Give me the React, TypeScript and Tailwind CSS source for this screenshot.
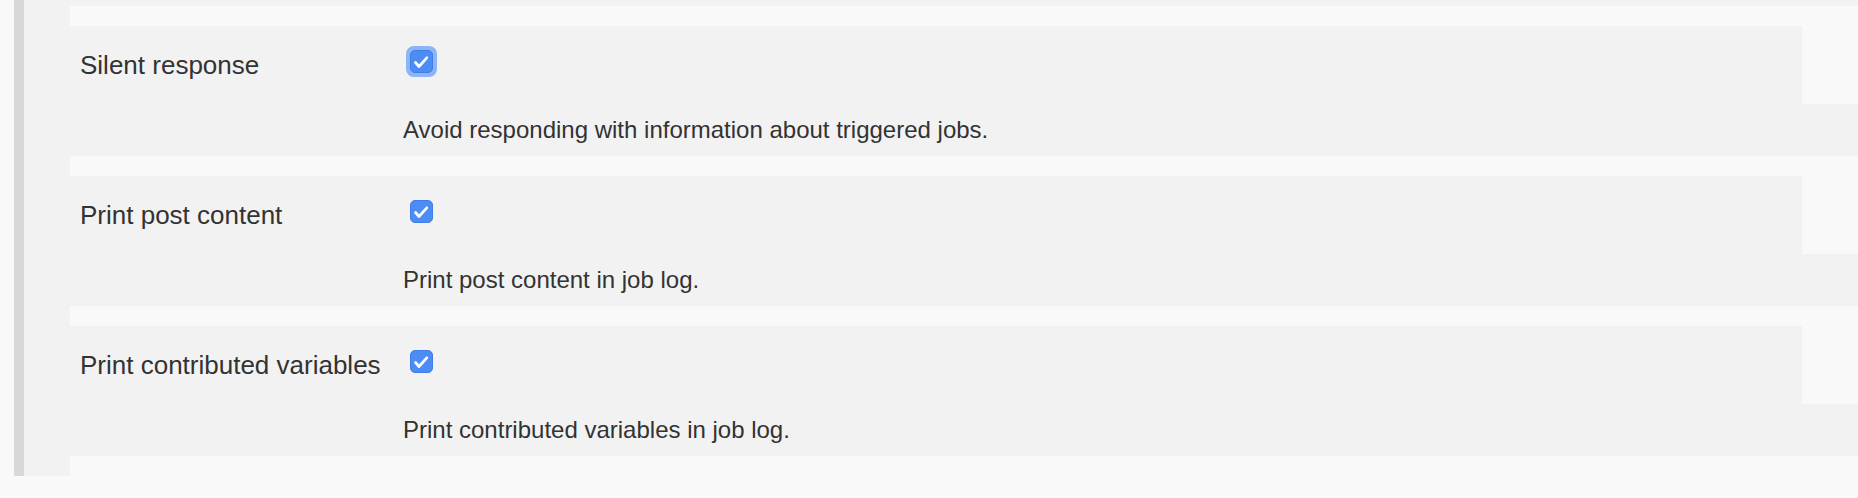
import React from 'react';

interface Setting {
  label: string;
  description: string;
  focused?: boolean;
}

const settings: Setting[] = [
  {
    label: 'Silent response',
    description: 'Avoid responding with information about triggered jobs.',
    focused: true,
  },
  {
    label: 'Print post content',
    description: 'Print post content in job log.',
  },
  {
    label: 'Print contributed variables',
    description: 'Print contributed variables in job log.',
  },
];

const CheckBox: React.FC<{ focused?: boolean }> = ({ focused }) => (
  <div
    className={
      focused
        ? 'ml-[4px] -mt-[4px] rounded-[8px] bg-[#8db4f7] p-[4px]'
        : 'ml-[8px]'
    }
  >
    <div className="h-[23px] w-[23px] rounded-[5px] border border-[#3f7ee8] bg-[#4b8cf5]">
      <svg width="21" height="21" viewBox="0 0 21 21" fill="none">
        <path
          d="M4.5 11.5 L8 15.5 L15.8 6.8"
          stroke="white"
          strokeWidth="2.7"
          strokeLinecap="round"
          strokeLinejoin="round"
        />
      </svg>
    </div>
  </div>
);

const App: React.FC = () => {
  return (
    <div className="h-[498px] w-full overflow-hidden bg-[#f9f9f9] font-['Liberation_Sans',Arial,sans-serif] text-[#333333]">
      <div className="ml-[14px] border-l-[10px] border-[#d8d8d8] bg-[#f2f2f2] pl-[46px] pt-[6px]">
        <div className="flex flex-col gap-5 bg-[#f9f9f9] py-5">
          {settings.map((s) => (
            <div key={s.label} className="flex flex-col">
              {/* name + checkbox */}
              <div className="flex h-[78px]">
                <div className="flex flex-1 items-start bg-[#f2f2f2] pt-[24px]">
                  <div className="w-[332px] pl-[10px] text-[26px] leading-[30px]">{s.label}</div>
                  <CheckBox focused={s.focused} />
                </div>
                <div className="w-[56px]"></div>
              </div>
              {/* help text */}
              <div className="h-[52px] bg-[#f2f2f2] pl-[333px] pt-[12px] text-[24px] leading-[28px]">
                {s.description}
              </div>
            </div>
          ))}
        </div>
      </div>
    </div>
  );
};

export default App;
